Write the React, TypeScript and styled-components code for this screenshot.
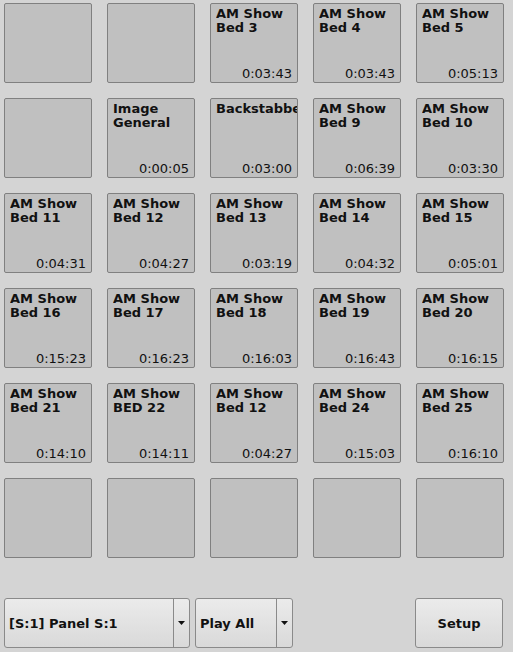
import React from 'react';
import styled, { createGlobalStyle } from 'styled-components';

const GlobalStyle = createGlobalStyle`
  html, body {
    margin: 0;
    padding: 0;
    background: #d4d4d4;
  }
  body {
    font-family: "DejaVu Sans", "Liberation Sans", sans-serif;
    color: #111;
  }
`;

const Page = styled.div`
  width: 513px;
  height: 652px;
  display: flex;
  flex-direction: column;
  box-sizing: border-box;
  padding: 3px 0 0 4px;
`;

const Grid = styled.div`
  display: grid;
  grid-template-columns: repeat(5, 88px);
  grid-auto-rows: 80px;
  column-gap: 15px;
  row-gap: 15px;
`;

const Cart = styled.div`
  box-sizing: border-box;
  border: 1px solid #808080;
  border-radius: 2px;
  background: #c0c0c0;
  display: flex;
  flex-direction: column;
  justify-content: space-between;
  padding: 3px 5px 1px 5px;
  overflow: hidden;
`;

const Title = styled.div`
  font-weight: bold;
  font-size: 13px;
  line-height: 14px;
  overflow: hidden;
  margin-right: -5px;
`;

const Length = styled.div`
  font-size: 13px;
  line-height: 15px;
  text-align: right;
`;

const Bar = styled.div`
  margin-top: 40px;
  display: flex;
  align-items: stretch;
  height: 50px;
  gap: 5px;
  padding-right: 10px;
`;

const Combo = styled.div<{ $w: number }>`
  box-sizing: border-box;
  width: ${(p) => p.$w}px;
  display: flex;
  border: 1px solid #8a8a8a;
  border-radius: 3px;
  background: linear-gradient(#ebebeb, #d9d9d9);
`;

const ComboLabel = styled.div`
  flex: 1;
  display: flex;
  align-items: center;
  padding-left: 4px;
  font-weight: bold;
  font-size: 13px;
`;

const ComboArrow = styled.div`
  width: 15px;
  border-left: 1px solid #8a8a8a;
  display: flex;
  align-items: center;
  justify-content: center;
`;

const Spacer = styled.div`
  flex: 1;
`;

const Button = styled.div`
  box-sizing: border-box;
  width: 88px;
  display: flex;
  align-items: center;
  justify-content: center;
  border: 1px solid #8a8a8a;
  border-radius: 3px;
  background: linear-gradient(#ebebeb, #d9d9d9);
  font-weight: bold;
  font-size: 13px;
`;

const Arrow = () => (
  <svg width="7" height="4" viewBox="0 0 7 4">
    <polygon points="0,0 7,0 3.5,4" fill="#111" />
  </svg>
);

type Item = { title?: string; time?: string };

const carts: Item[] = [
  {}, {},
  { title: 'AM Show Bed 3', time: '0:03:43' },
  { title: 'AM Show Bed 4', time: '0:03:43' },
  { title: 'AM Show Bed 5', time: '0:05:13' },
  {},
  { title: 'Image General', time: '0:00:05' },
  { title: 'Backstabbers', time: '0:03:00' },
  { title: 'AM Show Bed 9', time: '0:06:39' },
  { title: 'AM Show Bed 10', time: '0:03:30' },
  { title: 'AM Show Bed 11', time: '0:04:31' },
  { title: 'AM Show Bed 12', time: '0:04:27' },
  { title: 'AM Show Bed 13', time: '0:03:19' },
  { title: 'AM Show Bed 14', time: '0:04:32' },
  { title: 'AM Show Bed 15', time: '0:05:01' },
  { title: 'AM Show Bed 16', time: '0:15:23' },
  { title: 'AM Show Bed 17', time: '0:16:23' },
  { title: 'AM Show Bed 18', time: '0:16:03' },
  { title: 'AM Show Bed 19', time: '0:16:43' },
  { title: 'AM Show Bed 20', time: '0:16:15' },
  { title: 'AM Show Bed 21', time: '0:14:10' },
  { title: 'AM Show BED 22', time: '0:14:11' },
  { title: 'AM Show Bed 12', time: '0:04:27' },
  { title: 'AM Show Bed 24', time: '0:15:03' },
  { title: 'AM Show Bed 25', time: '0:16:10' },
  {}, {}, {}, {}, {},
];

const App: React.FC = () => {
  return (
    <>
      <GlobalStyle />
      <Page>
        <Grid>
          {carts.map((c, i) => (
            <Cart key={i}>
              <Title>{c.title}</Title>
              <Length>{c.time}</Length>
            </Cart>
          ))}
        </Grid>
        <Bar>
          <Combo $w={186}>
            <ComboLabel>[S:1] Panel S:1</ComboLabel>
            <ComboArrow><Arrow /></ComboArrow>
          </Combo>
          <Combo $w={98}>
            <ComboLabel>Play All</ComboLabel>
            <ComboArrow><Arrow /></ComboArrow>
          </Combo>
          <Spacer />
          <Button>Setup</Button>
        </Bar>
      </Page>
    </>
  );
};

export default App;
